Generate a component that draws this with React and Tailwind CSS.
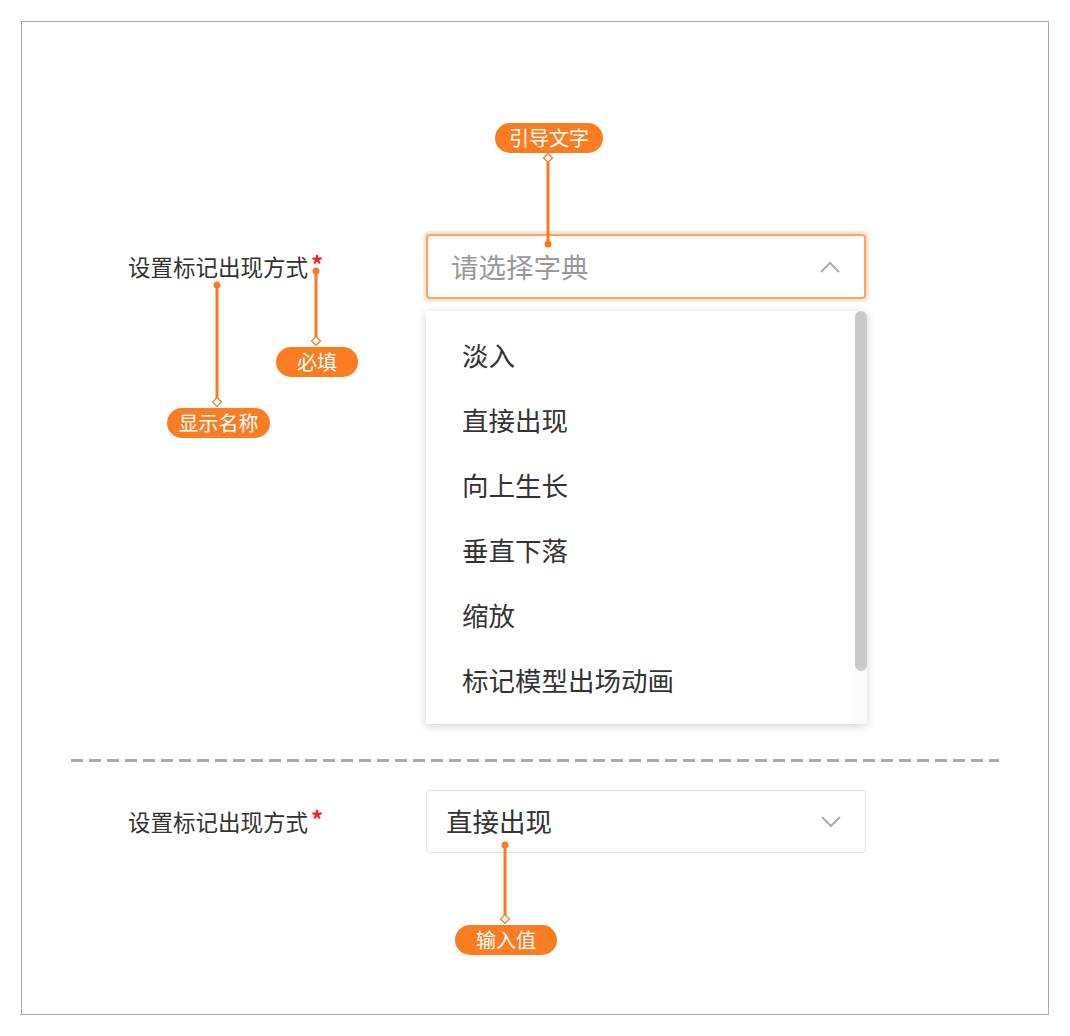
import React from "react";

const FONT = { fontFamily: '"Noto Sans CJK SC", "Noto Sans", sans-serif' };

const OPTIONS = ["淡入", "直接出现", "向上生长", "垂直下落", "缩放", "标记模型出场动画"];

// ─── Callout bits (annotation layer) ─────────────────────────────────────────

const CALLOUTS = [
  { x: 548, dot: 244, diamond: 158 },
  { x: 316, dot: 271, diamond: 341 },
  { x: 217, dot: 285, diamond: 402 },
  { x: 505, dot: 845, diamond: 919 },
];

function CalloutLines() {
  return (
    <svg
      className="absolute left-0 top-0 pointer-events-none"
      width="1070"
      height="1036"
      viewBox="0 0 1070 1036">
      {CALLOUTS.map((c, i) => {
        const up = c.diamond < c.dot;
        const lineEnd = up ? c.diamond + 4 : c.diamond - 4;
        return (
          <g key={i}>
            <line x1={c.x} y1={c.dot} x2={c.x} y2={lineEnd} stroke="#fb7a1e" strokeWidth="3" />
            <circle cx={c.x} cy={c.dot} r="3.5" fill="#fb7a1e" />
            <polygon
              points={`${c.x},${c.diamond - 4.5} ${c.x + 4.5},${c.diamond} ${c.x},${c.diamond + 4.5} ${c.x - 4.5},${c.diamond}`}
              fill="#fff"
              stroke="#fb7a1e"
              strokeWidth="1.2"
            />
          </g>
        );
      })}
    </svg>
  );
}

function Pill({ className, children }) {
  return (
    <div
      className={`absolute h-[30px] rounded-full bg-[#fb7d22] text-white text-[20px] leading-none flex items-center justify-center ${className}`}>
      {children}
    </div>
  );
}

// ─── Select parts ────────────────────────────────────────────────────────────

function Chevron({ up }) {
  return (
    <svg width="20" height="12" viewBox="0 0 20 12" fill="none">
      <polyline
        points={up ? "1,11 10,2 19,11" : "1,1 10,10 19,1"}
        stroke="#a9adb3"
        strokeWidth="2"
        strokeLinejoin="miter"
      />
    </svg>
  );
}

function Label() {
  return (
    <div className="w-[404px] shrink-0 pl-[106px] text-[22.5px] text-[#333] leading-none flex items-start">
      <span>设置标记出现方式</span>
      <span className="text-[#f5222d] text-[24px] font-bold ml-[3px] -mt-[3px]">*</span>
    </div>
  );
}

export default function App() {
  return (
    <div className="relative w-[1070px] h-[1036px] bg-white" style={FONT}>
      <div className="absolute left-[21px] top-[21px] w-[1028px] h-[994px] border border-[#aaaaaa] bg-white">
        {/* Row 1 — open select */}
        <div className="pt-[212px]">
          <div className="flex items-center">
            <Label />
            <div className="w-[440px] h-[65px] rounded-[4px] border-2 border-[#ffa263] shadow-[0_0_0_3px_#ffe6d5] flex items-center justify-between pl-[23px] pr-[24px]">
              <span className="text-[27.5px] text-[#999] leading-none">请选择字典</span>
              <Chevron up />
            </div>
          </div>

          {/* Dropdown panel */}
          <div className="ml-[404px] mt-[12px] w-[441px] h-[413px] bg-white shadow-[0_2px_8px_rgba(0,0,0,0.18)] rounded-[2px] flex">
            <div className="flex-1 py-[12px] pl-[36px]">
              {OPTIONS.map((o) => (
                <div key={o} className="h-[65px] flex items-center text-[26.5px] text-[#333] leading-none">
                  {o}
                </div>
              ))}
            </div>
            <div className="w-[12px] bg-[#fafafa]">
              <div className="h-[360px] rounded-full bg-[#c9c9c9]" />
            </div>
          </div>
        </div>

        {/* Divider */}
        <div className="mx-[49px] mt-[35px] h-[3px] bg-[repeating-linear-gradient(to_right,#aaaaaa_0_12px,transparent_12px_18px)]" />

        {/* Row 2 — closed select with value */}
        <div className="mt-[28px] flex items-center">
          <Label />
          <div className="w-[440px] h-[63px] rounded-[4px] border border-[#e2e2e2] flex items-center justify-between pl-[19px] pr-[24px]">
            <span className="text-[26.5px] text-[#333] leading-none">直接出现</span>
            <Chevron />
          </div>
        </div>
      </div>

      <CalloutLines />
      <Pill className="left-[495px] top-[123px] w-[108px]">引导文字</Pill>
      <Pill className="left-[276px] top-[347px] w-[82px]">必填</Pill>
      <Pill className="left-[167px] top-[408px] w-[103px]">显示名称</Pill>
      <Pill className="left-[455px] top-[925px] w-[102px]">输入值</Pill>
    </div>
  );
}
